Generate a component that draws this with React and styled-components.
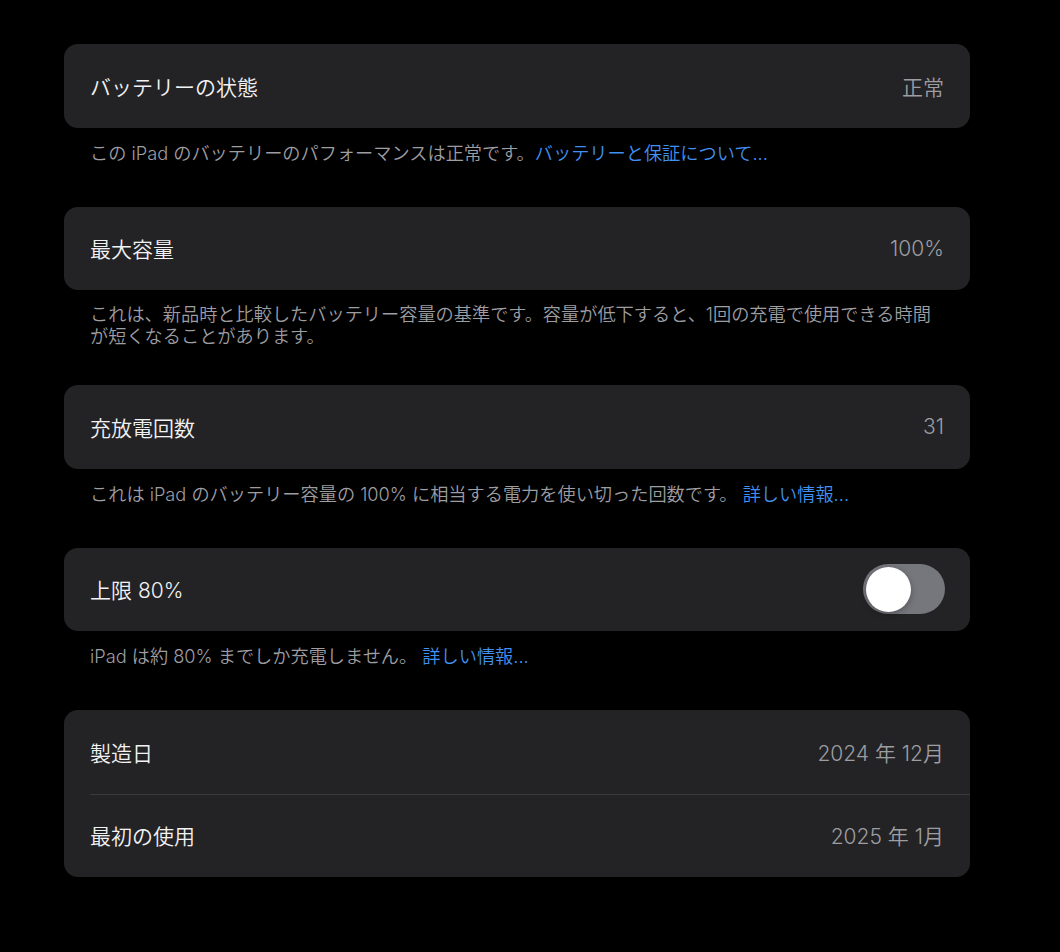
import React from 'react';
import styled, { createGlobalStyle } from 'styled-components';

const GlobalStyle = createGlobalStyle`
  html, body {
    margin: 0;
    padding: 0;
    background: #000;
  }
  body {
    font-family: "Inter", "Noto Sans CJK JP", sans-serif;
    -webkit-font-smoothing: antialiased;
  }
`;

const Page = styled.main`
  width: 906px;
  padding: 44px 0 0 64px;
`;

const Card = styled.section`
  background-color: #232325;
  border-radius: 14px;
  overflow: hidden;
`;

const Row = styled.div`
  height: 83.5px;
  display: flex;
  align-items: center;
  justify-content: space-between;
  padding: 0 26px;
  position: relative;

  & + &::before {
    content: '';
    position: absolute;
    top: 0;
    left: 26px;
    right: 0;
    height: 1px;
    background: #3a3a3d;
  }
`;

const Label = styled.span`
  color: #f2f2f4;
  font-size: 21px;
  font-weight: 350;
`;

const Value = styled.span`
  color: #9d9da2;
  font-size: 21px;
  font-weight: 350;
`;

const Footer = styled.p`
  margin: 0;
  padding: ${p => (p.$lines > 1 ? '13px 26px 38px' : '14px 26px 43px')};
  color: #9d9da2;
  font-size: 18.2px;
  font-weight: 350;
  line-height: 22px;
`;

const Link = styled.a`
  color: #4191f2;
  text-decoration: none;
`;

const Switch = styled.div`
  width: 82px;
  height: 50px;
  border-radius: 25px;
  background: #76767d;
  position: relative;
  margin-right: -1px;
`;

const Knob = styled.span`
  position: absolute;
  top: 2.5px;
  left: 2.5px;
  width: 45px;
  height: 45px;
  border-radius: 50%;
  background: #fff;
  box-shadow: 0 2px 6px rgba(0, 0, 0, 0.3);
`;

const App = () => {
  return (
    <Page>
      <GlobalStyle />

      <Card>
        <Row>
          <Label>バッテリーの状態</Label>
          <Value>正常</Value>
        </Row>
      </Card>
      <Footer>
        この iPad のバッテリーのパフォーマンスは正常です。
        <Link href="#">バッテリーと保証について...</Link>
      </Footer>

      <Card>
        <Row>
          <Label>最大容量</Label>
          <Value>100%</Value>
        </Row>
      </Card>
      <Footer $lines={2}>
        これは、新品時と比較したバッテリー容量の基準です。容量が低下すると、1回の充電で使用できる時間
        <br />
        が短くなることがあります。
      </Footer>

      <Card>
        <Row>
          <Label>充放電回数</Label>
          <Value>31</Value>
        </Row>
      </Card>
      <Footer>
        これは iPad のバッテリー容量の 100% に相当する電力を使い切った回数です。{' '}
        <Link href="#">詳しい情報...</Link>
      </Footer>

      <Card>
        <Row>
          <Label>上限 80%</Label>
          <Switch>
            <Knob />
          </Switch>
        </Row>
      </Card>
      <Footer>
        iPad は約 80% までしか充電しません。 <Link href="#">詳しい情報...</Link>
      </Footer>

      <Card>
        <Row>
          <Label>製造日</Label>
          <Value>2024 年 12月</Value>
        </Row>
        <Row>
          <Label>最初の使用</Label>
          <Value>2025 年 1月</Value>
        </Row>
      </Card>
    </Page>
  );
};

export default App;
